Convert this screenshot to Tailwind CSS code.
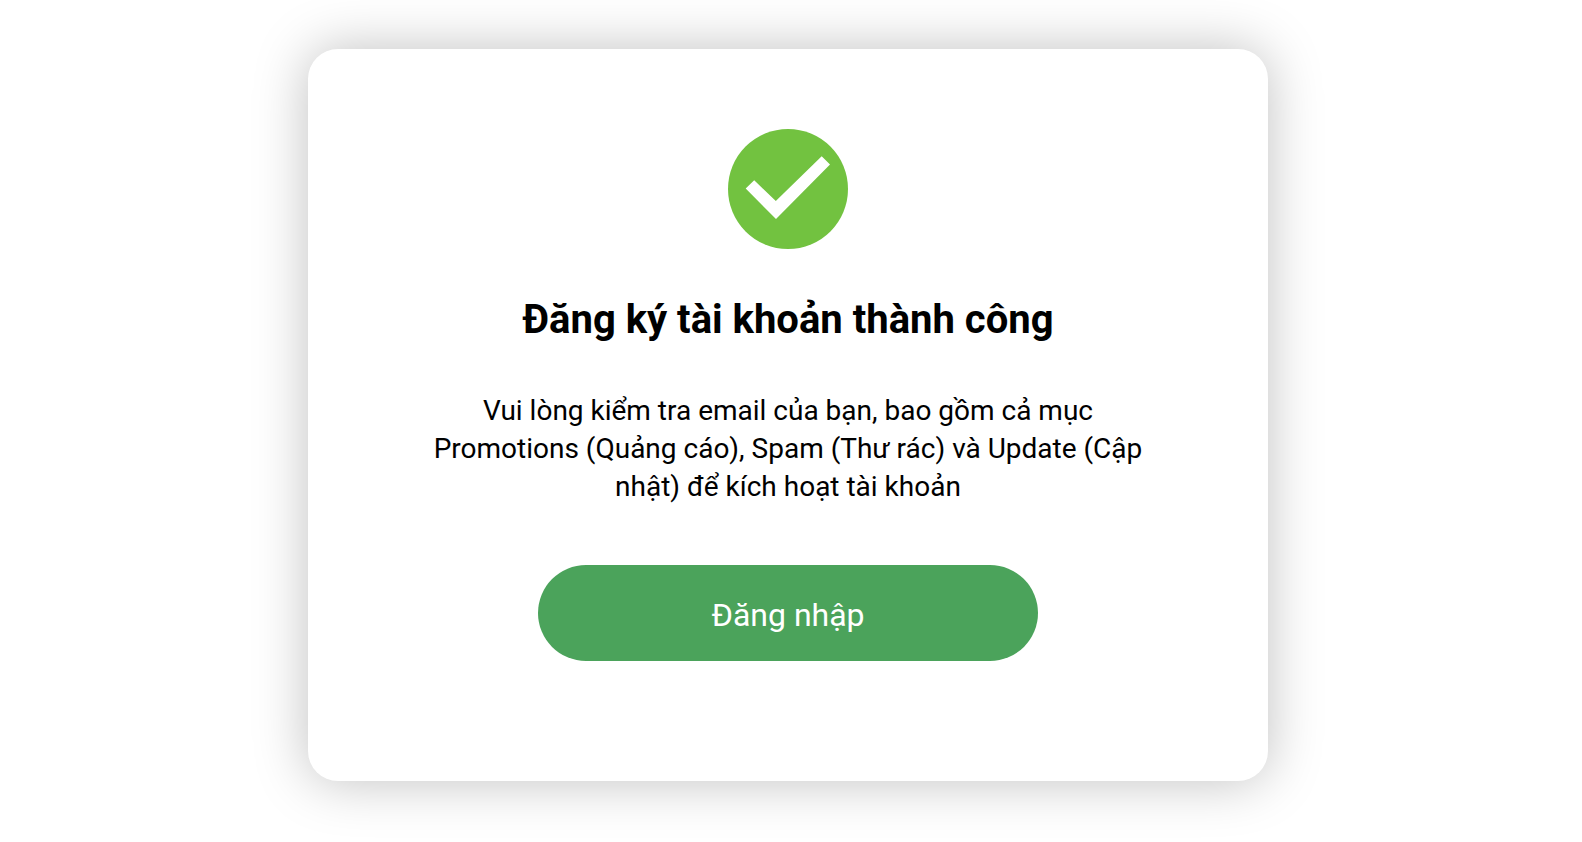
<!DOCTYPE html>
<html lang="vi">
<head>
    <meta charset="UTF-8" />
    <meta name="viewport" content="width=device-width, initial-scale=1.0" />
    <title>Đăng ký tài khoản thành công</title>
    <script src="https://cdn.jsdelivr.net/npm/@tailwindcss/browser@4"></script>
</head>
<body class="bg-white font-[Roboto,sans-serif] text-black antialiased">

    <main class="flex justify-center pt-[49px] pr-[22px] pb-[60px] pl-4">
        <section class="w-full max-w-[960px] rounded-[30px] bg-white px-6 pt-20 pb-[120px] text-center shadow-[0_0_54px_rgba(0,0,0,0.25)] md:px-[120px]">
            <svg class="mx-auto size-[120px]" viewBox="0 0 120 120" aria-hidden="true">
                <circle cx="60" cy="60" r="60" fill="#72c240" />
                <path d="M17.7 59.5 L26.2 51.3 L47.8 72 L93.7 27.3 L102 35.5 L48 90 Z" fill="#fff" />
            </svg>

            <h1 class="mt-[47px] text-[40px] leading-[48px] font-bold">Đăng ký tài khoản thành công</h1>

            <p class="mt-12 text-[28px] leading-[38px]">Vui lòng kiểm tra email của bạn, bao gồm cả mục Promotions (Quảng cáo), Spam (Thư rác) và Update (Cập nhật) để kích hoạt tài khoản</p>

            <button type="button" class="mt-[59px] h-24 w-full max-w-[500px] cursor-pointer rounded-full bg-[#4ba35b] pt-1 text-[32px] text-white hover:bg-[#418f50]">Đăng nhập</button>
        </section>
    </main>

</body>
</html>
